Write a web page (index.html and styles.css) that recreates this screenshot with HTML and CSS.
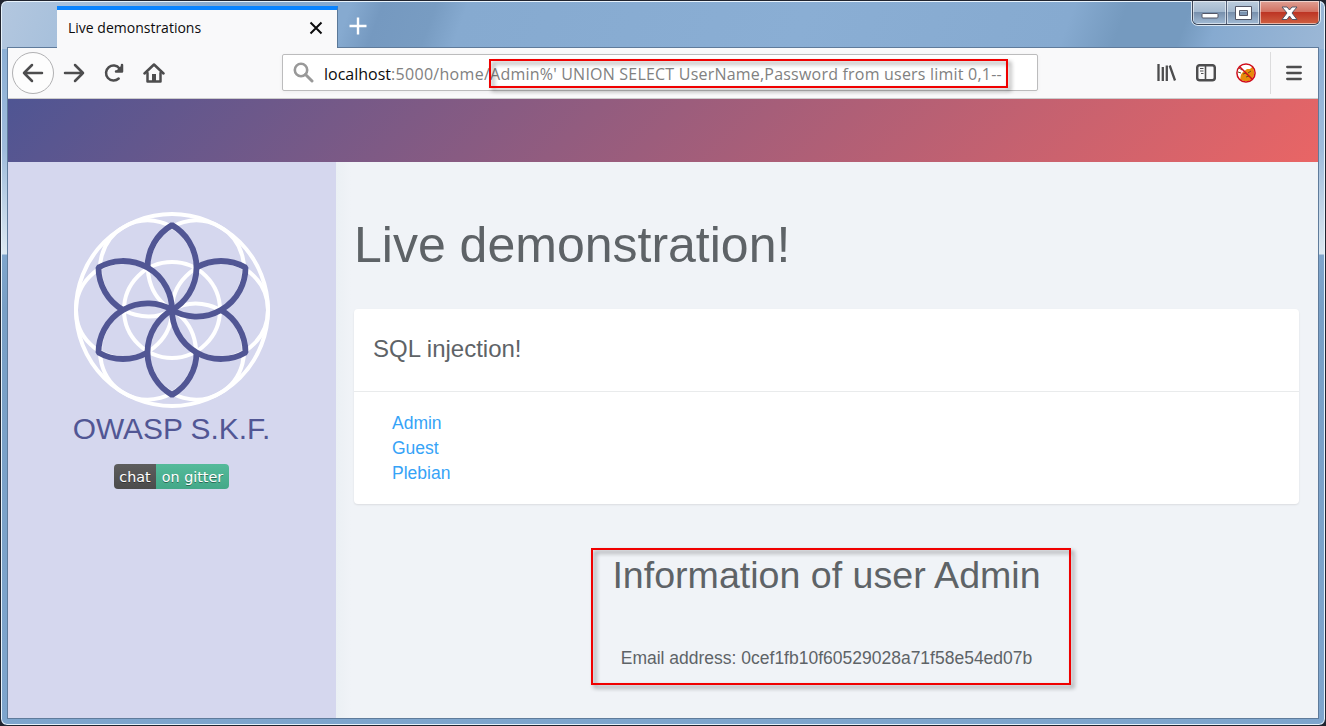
FILE: index.html
```html
<!DOCTYPE html>
<html lang="en">
<head>
<meta charset="utf-8">
<title>Live demonstrations</title>
<link rel="stylesheet" href="styles.css">
</head>
<body>
<div class="window">
  <header class="titlebar">
    <div class="tab"><span class="tab-title">Live demonstrations</span>
      <svg class="tab-close" width="14" height="14" viewBox="0 0 14 14"><path d="M1.5 1.5l11 11M12.5 1.5l-11 11" stroke="#0c0c0d" stroke-width="2"/></svg>
    </div>
    <svg class="new-tab" width="18" height="18" viewBox="0 0 18 18"><path d="M9 .5v17M.5 9h17" stroke="#fff" stroke-width="2.4"/></svg>
    <div class="controls">
      <span class="control minimize"><svg width="19" height="8" viewBox="0 0 19 8"><rect x="1" y="1.5" width="16" height="4.5" rx="1" fill="#fff" stroke="#535666"/></svg></span>
      <span class="control maximize"><svg width="19" height="15" viewBox="0 0 19 15"><path fill="#fff" fill-rule="evenodd" stroke="#535666" d="M1.500.5h16v13h-16zM5.500 4.500v5h8v-5z"/></svg></span>
      <span class="control close"><svg width="17" height="15" viewBox="0 0 17 15"><path fill="#fff" stroke="#535666" d="M1 1h5l2.500 3L11 1h5l-5 6 5 6.500h-5L8.500 10 6 13.500H1L6 7z"/></svg></span>
    </div>
  </header>
  <div class="client">
    <nav class="toolbar">
      <span class="back"><svg width="22" height="20" viewBox="0 0 22 20"><path d="M20 10H2M10 2l-8 8 8 8" class="line"/></svg></span>
      <svg class="forward" width="22" height="20" viewBox="0 0 22 20"><path d="M2 10h18M12 2l8 8-8 8" class="line"/></svg>
      <svg class="reload" width="20" height="20" viewBox="0 0 20 20"><path d="M14.700 15.500A7.500 7.500 0 1 1 15.500 5.500" class="line"/><path d="M18 2v6.500h-6" class="line"/><path d="M19 1v8h-8z" fill="#4d4d4e"/></svg>
      <svg class="home" width="22" height="20" viewBox="0 0 22 20"><path d="M1.500 10.500L11 1.500l9.500 9" class="line"/><path d="M4.500 10v8.500h13V10" class="line"/><path d="M9 18v-7h4v7z" fill="#4d4d4e"/></svg>
      <div class="address">
        <svg class="search" width="21" height="21" viewBox="0 0 21 21"><circle cx="8" cy="8" r="6.200" fill="none" stroke="#999" stroke-width="2.600"/><path d="M12.500 12.500L19 19" stroke="#999" stroke-width="3" stroke-linecap="round"/></svg>
        <span class="host">localhost</span><span class="path">:5000/home/</span><span class="query">Admin%' UNION SELECT UserName,Password from users limit 0,1--</span>
        <span class="mark url-mark"></span>
      </div>
      <svg class="library" width="20" height="18" viewBox="0 0 20 18"><path d="M1.500 0v17M5.800 3v14M9.800 1.500V17M12.700 1.500L18 16.500" fill="none" stroke="#4d4d4e" stroke-width="2.300"/></svg>
      <svg class="sidebar-icon" width="20" height="18" viewBox="0 0 20 18"><rect x="1.200" y="1.200" width="17.600" height="15" rx="2.500" class="line"/><path d="M9.500 1v15" stroke="#4d4d4e" stroke-width="1.600"/><path d="M4 4.500h3.500M4 7h3.500M5 9.500h2.500" stroke="#4d4d4e"/></svg>
      <svg class="blocked" width="20" height="20" viewBox="0 0 20 20"><circle cx="10" cy="10" r="9" fill="#fff"/><path d="M4 17c1-4 0-5 3-8l4-3 3 0 3-3 1 5c1 4-1 8-5 10-4 0-6 0-9-1z" fill="#e88b0b"/><path d="M3 5l3 2M2 9l3 1M7 11l3-1M12 10l3-2M10 14l3-1" stroke="#64511f"/><circle cx="10" cy="10" r="9.100" fill="none" stroke="#d00d1b" stroke-width="1.500"/><path d="M3.500 3.500l13 13" stroke="#d00d1b" stroke-width="1.500"/></svg>
      <span class="divider"></span>
      <svg class="menu" width="16" height="16" viewBox="0 0 16 16"><path d="M1.200 2h13.600M1.200 8h13.600M1.200 14h13.600" stroke="#4d4d4e" stroke-width="2.300" stroke-linecap="round"/></svg>
    </nav>
    <div class="banner"></div>
    <div class="page">
      <aside class="sidebar">
        <svg class="logo" width="200" height="200" viewBox="-100 -100 200 200">
          <defs><circle id="ring" cy="-48" r="48"/><path id="petal" d="M-24.500-42.440A49 49 0 0 1 0-84.870A49 49 0 0 1 0 0"/></defs>
          <g fill="none" stroke="#fff" stroke-width="4"><circle r="96"/><circle r="48"/>
            <use href="#ring" transform="rotate(30)"/><use href="#ring" transform="rotate(90)"/><use href="#ring" transform="rotate(150)"/><use href="#ring" transform="rotate(210)"/><use href="#ring" transform="rotate(270)"/><use href="#ring" transform="rotate(330)"/></g>
          <g fill="none" stroke="#515694" stroke-width="5.800" stroke-linejoin="bevel"><use href="#petal"/><use href="#petal" transform="rotate(60)"/><use href="#petal" transform="rotate(120)"/><use href="#petal" transform="rotate(180)"/><use href="#petal" transform="rotate(240)"/><use href="#petal" transform="rotate(300)"/></g>
        </svg>
        <div class="brand">OWASP S.K.F.</div>
        <div class="badge"><span class="chat">chat</span><span class="gitter">on gitter</span></div>
      </aside>
      <main class="main">
        <h1>Live demonstration!</h1>
        <section class="card">
          <h2>SQL injection!</h2>
          <div class="links"><a>Admin</a><a>Guest</a><a>Plebian</a></div>
        </section>
        <section class="result">
          <h3>Information of user Admin</h3>
          <p>Email address: 0cef1fb10f60529028a71f58e54ed07b</p>
          <span class="mark result-mark"></span>
        </section>
      </main>
    </div>
  </div>
</div>
</body>
</html>
```
FILE: styles.css
```css
* { box-sizing: border-box; }
body { margin: 0; background: #20242f; font-family: "Liberation Sans", Arial, sans-serif; }
svg { display: block; flex: none; }
.line { fill: none; stroke: #4d4d4e; stroke-width: 2.5; stroke-linecap: round; stroke-linejoin: round; }
.window {
  width: 1326px; height: 726px; padding: 0 6px 6px; overflow: hidden;
  border: 1px solid #20242f; border-radius: 7px;
  box-shadow: inset 0 0 0 1px #e8f3fc;
  background:
    linear-gradient(110deg, #b3c7df 0, #a5bfdb 80px, #86aad0 200px, #86aad0 330px, #7599c0 360px, #789cc2 410px, #86aad0 440px, #8aaed4 760px, #86aad0 1010px, #759abf 1060px, #759abf 1120px, #86aad0 1150px, #a9c0da 1326px) 0 0 / 100% 48px no-repeat,
    linear-gradient(#8db0d5 0, #9ebbdb 100px, #dce8f1 205px, #7fa5cc 206px, #789fc6 260px, #7ea5cd 100%) 0 48px / 100% 678px no-repeat;
}
.titlebar { position: relative; z-index: 1; display: flex; height: 46px; }
.tab {
  display: flex; align-items: center; justify-content: space-between;
  width: 281px; height: 42px; margin: 5px 0 0 50px; padding: 0 14px 3px 11px;
  background: #f9f9fa; border-top: 4px solid #0a84ff; border-right: 1px solid #5a7898;
}
.tab-title { font: 14px/20px "Open Sans", sans-serif; color: #0c0c0d; white-space: nowrap; }
.tab-close { margin-top: 1px; }
.new-tab { margin: 16px 0 0 11px; }
.controls {
  display: flex; width: 128px; height: 24px; margin: 0 -1px 0 auto;
  border: 1px solid #3d4657; border-top: 0; border-radius: 0 0 6px 6px;
  box-shadow: 0 0 0 1px #dce8f3; overflow: hidden;
}
.control { display: flex; align-items: center; justify-content: center; box-shadow: inset 0 0 0 1px #ffffff88; }
.minimize { width: 35px; padding: 7px 0 0 2px; border-right: 1px solid #53617a; background: linear-gradient(#bdcddd 0, #a3b8ce 48%, #7890ad 50%, #a2bbd5); }
.maximize { width: 33px; padding-top: 1px; border-right: 1px solid #53617a; background: linear-gradient(#bdcddd 0, #a3b8ce 48%, #7890ad 50%, #a2bbd5); }
.close { width: 60px; padding: 1px 0 0 1px; background: linear-gradient(#dfa094 0, #d17060 48%, #bd3524 50%, #cf6041); }
.client { width: 1312px; height: 672px; overflow: hidden; border: 1px solid #5f7b9b; background: #f0f3f7; }
.toolbar { display: flex; align-items: center; height: 51px; background: #f9f9fa; border-bottom: 1px solid #ccc; }
.back { display: flex; align-items: center; justify-content: center; flex: none; width: 42px; height: 42px; margin: 0 0 0 4px; border: 1px solid #b1b1b3; border-radius: 50%; background: #fdfdfd; }
.forward { margin-left: 9px; }
.reload { margin-left: 19px; }
.home { margin-left: 19px; }
.address {
  position: relative; display: flex; align-items: center; flex: none;
  width: 756px; height: 37px; margin: 0 0 2px 117px; padding-left: 10px;
  border: 1px solid #bcbcbd; border-radius: 2px; background: #fff; box-shadow: 0 1px 4px #0000000d;
  font: 16px/24px "Open Sans", sans-serif; color: #818181; white-space: nowrap;
}
.search { margin-right: 10px; }
.host, .path, .query { padding-top: 3px; }
.host { color: #0c0c0d; }
.path { letter-spacing: .3px; }
.query { letter-spacing: .21px; }
.mark { position: absolute; border: 2px solid #f00000; filter: drop-shadow(3px 3px 2px #00000070); }
.url-mark { left: 206px; top: 4px; width: 519px; height: 29px; }
.library { margin-left: 119px; }
.sidebar-icon { margin-left: 19px; }
.blocked { margin-left: 20px; }
.divider { width: 1px; height: 42px; margin-left: 14px; background: #dcdcdd; }
.menu { margin-left: 15px; }
.banner { height: 63px; background: linear-gradient(135deg, #4f5593, #e96565); }
.page { display: flex; height: 556px; }
.sidebar { display: flex; flex-direction: column; align-items: center; width: 328px; padding: 48px 1px 0 0; background: #d5d7ee; }
.brand { margin-top: 1px; font-size: 29.900px; line-height: 36px; color: #515694; white-space: nowrap; }
.badge { display: flex; height: 25px; margin-top: 17px; overflow: hidden; border-radius: 4px; font: 14.300px/26px "DejaVu Sans", sans-serif; color: #fff; text-shadow: 0 1px #0006; white-space: nowrap; }
.chat { width: 42px; text-align: center; background: linear-gradient(#5d5d5d, #4b4b4b); }
.gitter { width: 73px; text-align: center; background: linear-gradient(#54ba9a, #43a888); }
.main { flex: 1; padding: 50px 19px 0 18px; background: linear-gradient(90deg, #ebf0f4, #f0f3f7 15px); color: #5e6367; }
h1, h2, h3, p { margin: 0; font-weight: 400; white-space: nowrap; }
h1 { font-size: 50px; line-height: 66px; }
.card { height: 195px; margin-top: 31px; border-radius: 4px; background: #fff; box-shadow: 0 1px 2px #00000018; }
h2 { height: 83px; padding: 24px 19px; border-bottom: 1px solid #e9ebec; font-size: 24px; line-height: 32px; }
.links { display: flex; flex-direction: column; padding: 19px 38px; font-size: 17.500px; line-height: 25px; color: #36a3f7; }
.result { position: relative; padding-top: 46px; text-align: center; }
h3 { font-size: 37.600px; line-height: 50px; }
p { margin-top: 45px; font-size: 17.500px; line-height: 26px; }
.result-mark { left: 237px; top: 44px; width: 480px; height: 137px; }
```
